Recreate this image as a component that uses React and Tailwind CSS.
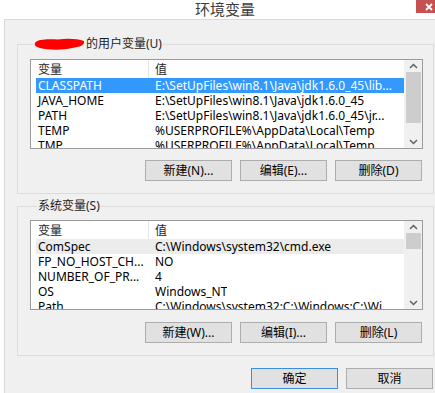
import React from "react";

const userVars = [
  ["CLASSPATH", "E:\\SetUpFiles\\win8.1\\Java\\jdk1.6.0_45\\lib..."],
  ["JAVA_HOME", "E:\\SetUpFiles\\win8.1\\Java\\jdk1.6.0_45"],
  ["PATH", "E:\\SetUpFiles\\win8.1\\Java\\jdk1.6.0_45\\jr..."],
  ["TEMP", "%USERPROFILE%\\AppData\\Local\\Temp"],
  ["TMP", "%USERPROFILE%\\AppData\\Local\\Temp"],
];

const sysVars = [
  ["ComSpec", "C:\\Windows\\system32\\cmd.exe"],
  ["FP_NO_HOST_CH...", "NO"],
  ["NUMBER_OF_PR...", "4"],
  ["OS", "Windows_NT"],
  ["Path", "C:\\Windows\\system32;C:\\Windows;C:\\Wi"],
];

function Chevron({ down }) {
  return (
    <svg width="9" height="6" viewBox="0 0 9 6">
      <polyline
        points={down ? "1,1 4.5,4.5 8,1" : "1,5 4.5,1.5 8,5"}
        fill="none"
        stroke="#606060"
        strokeWidth="1.5"
      />
    </svg>
  );
}

function ScrollBar({ thumb }) {
  return (
    <div className="flex w-[18px] shrink-0 flex-col items-center bg-[#f0f0f0]">
      <div className="flex h-[12px] items-center justify-center">
        <Chevron />
      </div>
      <div className={`w-[15px] bg-[#cdcdcd] ${thumb}`} />
      <div className="flex-1" />
      <div className="flex h-[13px] items-center justify-center">
        <Chevron down />
      </div>
    </div>
  );
}

function ListView({ rows, selClass, thumb }) {
  return (
    <div className="flex h-[90px] overflow-hidden border border-[#9a9a9a] bg-white leading-[15px]">
      <div className="min-w-0 flex-1">
        <div className="flex h-[18px] items-center text-[#1e1e1e]">
          <div className="w-[117px] shrink-0 pl-[7px]">变量</div>
          <div className="h-full w-px bg-[#e5e5e5]" />
          <div className="pl-[6px]">值</div>
        </div>
        {rows.map((r, i) => (
          <div
            key={i}
            className={`ml-[5px] flex h-[15px] items-center ${i === 0 ? selClass : "text-black"}`}
          >
            <div className="w-[112px] shrink-0 overflow-hidden whitespace-nowrap pl-[2px]">
              {r[0]}
            </div>
            <div className="overflow-hidden whitespace-nowrap pl-[7px]">{r[1]}</div>
          </div>
        ))}
      </div>
      <ScrollBar thumb={thumb} />
    </div>
  );
}

function Btn({ children, focus }) {
  return (
    <button
      className={`flex h-[21px] w-[87px] items-center justify-center border bg-[#e1e1e1] text-[12px] leading-[15px] text-black ${
        focus ? "border-[#3d8ee0]" : "border-[#adadad]"
      }`}
    >
      {children}
    </button>
  );
}

function Scribble() {
  return (
    <svg width="51" height="14" viewBox="0 0 51 14" className="mr-px block">
      <path
        d="M1 6 C3 2 14 2 24 2.5 C34 1 44 2 50 4 C51 8 46 10 38 11 C28 13.5 14 13 6 11 C2 10 0 8 1 6 Z"
        fill="#ff0000"
      />
    </svg>
  );
}

export default function App() {
  return (
    <div className="flex h-[393px] w-[435px] flex-col overflow-hidden bg-white font-['Noto_Sans','Noto_Sans_CJK_SC',sans-serif] text-[12px]">
      {/* title bar */}
      <div className="flex h-[19px] shrink-0">
        <div className="flex flex-1 justify-center pl-[34px] text-[15px] leading-[19px] text-[#3c3c3c]">
          环境变量
        </div>
        <div className="flex h-[13px] w-[19px] items-center justify-end bg-[#c75050] pr-[2px]">
          <svg width="8" height="8" viewBox="0 0 8 8">
            <path d="M1 1 L7 7 M7 1 L1 7" stroke="#fff" strokeWidth="1.8" />
          </svg>
        </div>
      </div>

      {/* client area */}
      <div className="ml-[4px] flex flex-1 flex-col border-l border-t border-[#dadada] bg-[#f0f0f0]">
        <fieldset className="ml-[12px] mr-[1px] mt-[17px] border border-[#dcdcdc] pb-[12px] pl-[12px] pr-[10px] pt-[8px]">
          <legend className="ml-[3px] flex h-[14px] items-center px-[1px] leading-[14px] text-[#1e1e1e]">
            <Scribble />
            <span>的用户变量(U)</span>
          </legend>
          <ListView rows={userVars} selClass="bg-[#3399ff] text-white" thumb="h-[51px]" />
          <div className="mr-px mt-[11px] flex justify-end gap-[8px]">
            <Btn>新建(N)...</Btn>
            <Btn>编辑(E)...</Btn>
            <Btn>删除(D)</Btn>
          </div>
        </fieldset>

        <fieldset className="ml-[12px] mr-[1px] mt-[5px] border border-[#dcdcdc] pb-[12px] pl-[12px] pr-[10px] pt-[7px]">
          <legend className="ml-[7px] h-[14px] px-[1px] leading-[14px] text-[#1e1e1e]">系统变量(S)</legend>
          <ListView rows={sysVars} selClass="bg-[#ececec] text-black" thumb="h-[16px]" />
          <div className="mr-px mt-[12px] flex justify-end gap-[8px]">
            <Btn>新建(W)...</Btn>
            <Btn>编辑(I)...</Btn>
            <Btn>删除(L)</Btn>
          </div>
        </fieldset>

        <div className="mr-[2px] mt-[12px] flex justify-end gap-[8px]">
          <Btn focus>确定</Btn>
          <Btn>取消</Btn>
        </div>
      </div>
    </div>
  );
}
